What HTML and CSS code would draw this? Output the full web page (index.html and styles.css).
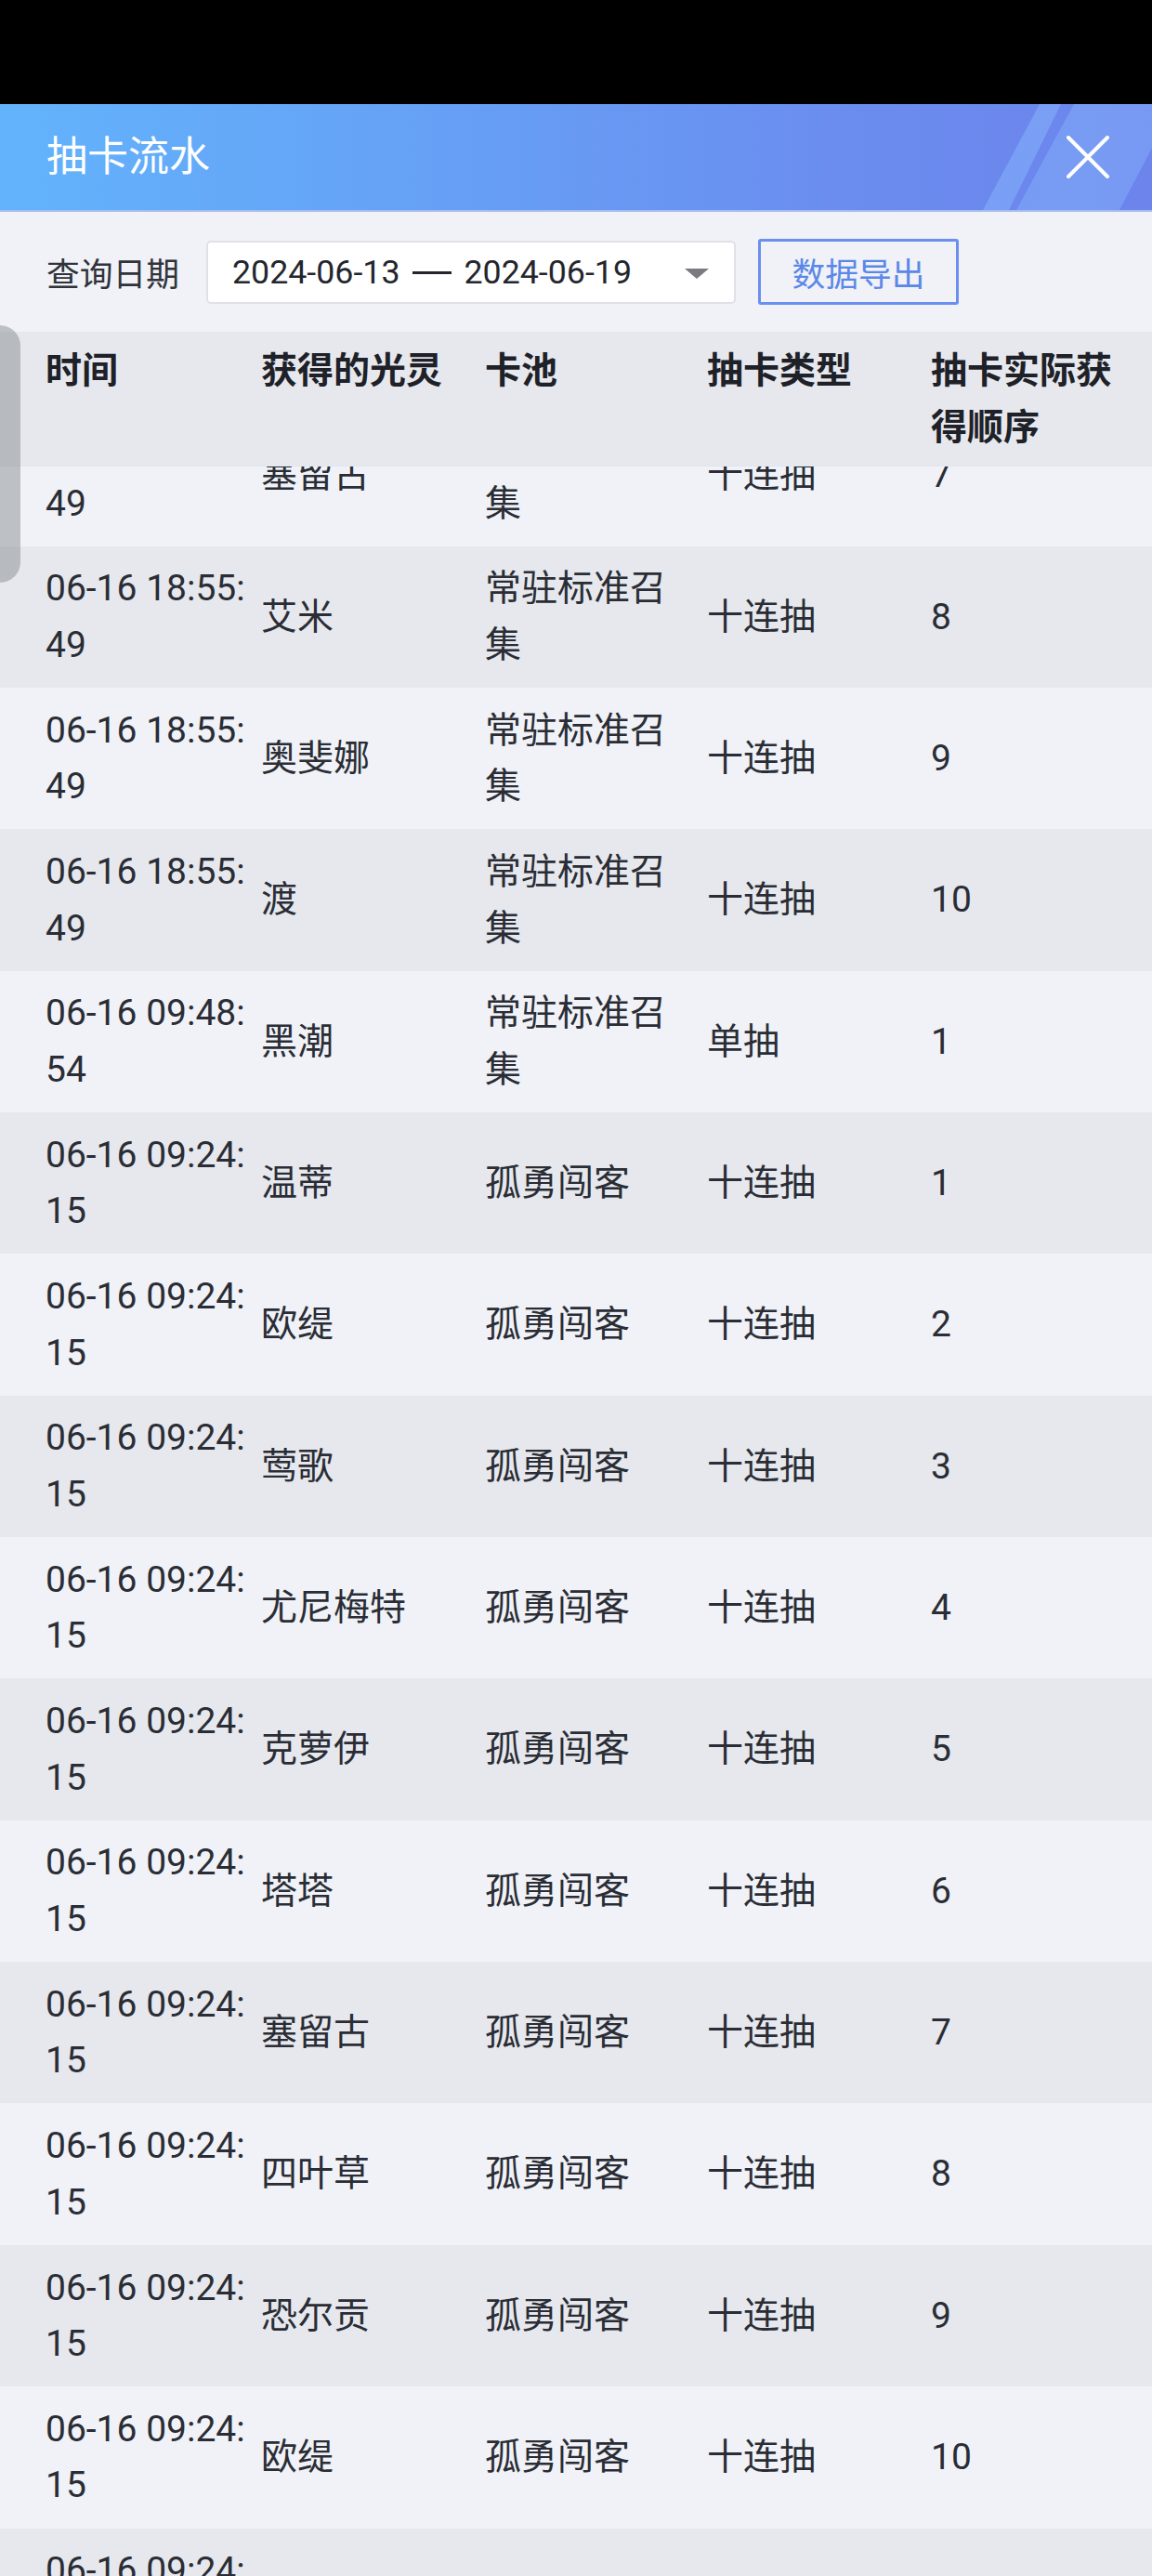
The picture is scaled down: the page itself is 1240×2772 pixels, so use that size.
FILE: index.html
```html
<!DOCTYPE html>
<html lang="zh-CN">
<head>
<meta charset="utf-8">
<title>抽卡流水</title>
<link rel="stylesheet" href="styles.css">
</head>
<body>
<div class="screen">
  <div class="statusbar"></div>
  <header class="titlebar">
    <svg class="stripes" viewBox="1040 0 200 114" preserveAspectRatio="none" aria-hidden="true">
      <polygon points="1119,0 1142,0 1086,114 1058,114" fill="#8cbcff" fill-opacity="0.45"/>
      <polygon points="1156,0 1240,0 1240,47 1205,114 1094,114" fill="#8cbcff" fill-opacity="0.38"/>
    </svg>
    <h1 class="title">抽卡流水</h1>
    <button class="close" aria-label="关闭">
      <svg viewBox="0 0 48 46" width="48" height="46"><path d="M3 2 L45 44 M45 2 L3 44" stroke="#fff" stroke-width="4" stroke-linecap="round" fill="none"/></svg>
    </button>
  </header>
  <div class="filters">
    <span class="filter-label">查询日期</span>
    <div class="date-range">
      <span class="date-text">
        <span>2024-06-13</span>
        <span class="date-sep" aria-label="至"></span>
        <span>2024-06-19</span>
      </span>
      <span class="caret"></span>
    </div>
    <button class="export">数据导出</button>
  </div>
  <div class="table">
    <div class="thead">
      <div class="cell c1">时间</div>
      <div class="cell">获得的光灵</div>
      <div class="cell">卡池</div>
      <div class="cell">抽卡类型</div>
      <div class="cell">抽卡实际获得顺序</div>
    </div>
    <div class="tbody">
      <div class="tbody-inner">
        <div class="row"><div class="cell c1">06-16 18:55:49</div><div class="cell">塞留古</div><div class="cell">常驻标准召集</div><div class="cell">十连抽</div><div class="cell">7</div></div>
        <div class="row"><div class="cell c1">06-16 18:55:49</div><div class="cell">艾米</div><div class="cell">常驻标准召集</div><div class="cell">十连抽</div><div class="cell">8</div></div>
        <div class="row"><div class="cell c1">06-16 18:55:49</div><div class="cell">奥斐娜</div><div class="cell">常驻标准召集</div><div class="cell">十连抽</div><div class="cell">9</div></div>
        <div class="row"><div class="cell c1">06-16 18:55:49</div><div class="cell">渡</div><div class="cell">常驻标准召集</div><div class="cell">十连抽</div><div class="cell">10</div></div>
        <div class="row"><div class="cell c1">06-16 09:48:54</div><div class="cell">黑潮</div><div class="cell">常驻标准召集</div><div class="cell">单抽</div><div class="cell">1</div></div>
        <div class="row"><div class="cell c1">06-16 09:24:15</div><div class="cell">温蒂</div><div class="cell">孤勇闯客</div><div class="cell">十连抽</div><div class="cell">1</div></div>
        <div class="row"><div class="cell c1">06-16 09:24:15</div><div class="cell">欧缇</div><div class="cell">孤勇闯客</div><div class="cell">十连抽</div><div class="cell">2</div></div>
        <div class="row"><div class="cell c1">06-16 09:24:15</div><div class="cell">莺歌</div><div class="cell">孤勇闯客</div><div class="cell">十连抽</div><div class="cell">3</div></div>
        <div class="row"><div class="cell c1">06-16 09:24:15</div><div class="cell">尤尼梅特</div><div class="cell">孤勇闯客</div><div class="cell">十连抽</div><div class="cell">4</div></div>
        <div class="row"><div class="cell c1">06-16 09:24:15</div><div class="cell">克萝伊</div><div class="cell">孤勇闯客</div><div class="cell">十连抽</div><div class="cell">5</div></div>
        <div class="row"><div class="cell c1">06-16 09:24:15</div><div class="cell">塔塔</div><div class="cell">孤勇闯客</div><div class="cell">十连抽</div><div class="cell">6</div></div>
        <div class="row"><div class="cell c1">06-16 09:24:15</div><div class="cell">塞留古</div><div class="cell">孤勇闯客</div><div class="cell">十连抽</div><div class="cell">7</div></div>
        <div class="row"><div class="cell c1">06-16 09:24:15</div><div class="cell">四叶草</div><div class="cell">孤勇闯客</div><div class="cell">十连抽</div><div class="cell">8</div></div>
        <div class="row"><div class="cell c1">06-16 09:24:15</div><div class="cell">恐尔贡</div><div class="cell">孤勇闯客</div><div class="cell">十连抽</div><div class="cell">9</div></div>
        <div class="row"><div class="cell c1">06-16 09:24:15</div><div class="cell">欧缇</div><div class="cell">孤勇闯客</div><div class="cell">十连抽</div><div class="cell">10</div></div>
        <div class="row"><div class="cell c1">06-16 09:24:15</div><div class="cell">卡蒂</div><div class="cell">孤勇闯客</div><div class="cell">十连抽</div><div class="cell">1</div></div>
      </div>
    </div>
  </div>
  <div class="side-handle"></div>
</div>
</body>
</html>
```

FILE: styles.css
```css
* {
  box-sizing: border-box;
}

html,
body {
  margin: 0;
  padding: 0;
}

body {
  width: 1240px;
  height: 2772px;
  overflow: hidden;
  background: #f0f2f7;
  font-family: Roboto, "Noto Sans CJK SC", sans-serif;
  color: #2a2d35;
}

.screen {
  position: relative;
  height: 2772px;
  overflow: hidden;
  display: flex;
  flex-direction: column;
}

.statusbar {
  flex: none;
  height: 112px;
  background: #000;
}

.titlebar {
  position: relative;
  flex: none;
  height: 116px;
  display: flex;
  align-items: center;
  padding-left: 50px;
  background: linear-gradient(90deg, #62b3fc 0%, #669ff5 40%, #6b8cef 75%, #6c84ec 100%);
  border-bottom: 2px solid #a7bdee;
  overflow: hidden;
}

.stripes {
  position: absolute;
  top: 0;
  right: 0;
  width: 200px;
  height: 114px;
}

.title {
  position: relative;
  margin: 0;
  font-size: 44px;
  font-weight: 400;
  line-height: 1;
  color: #fff;
}

.close {
  position: relative;
  margin-left: auto;
  margin-right: 45px;
  padding: 0;
  border: 0;
  background: none;
  width: 48px;
  height: 46px;
  display: flex;
}

.filters {
  flex: none;
  height: 129px;
  display: flex;
  align-items: center;
  padding-left: 50px;
  background: #f0f2f7;
}

.filter-label {
  font-size: 35.75px;
  color: #30333a;
  margin-right: 29px;
}

.date-range {
  width: 570px;
  height: 68px;
  background: #fff;
  border: 2px solid #dfe1e6;
  border-radius: 5px;
  display: flex;
  align-items: center;
  justify-content: space-between;
  padding: 0 27px 0 26px;
  margin-right: 24px;
}

.date-text {
  display: flex;
  align-items: center;
  font-size: 35.75px;
  color: #23262d;
  white-space: nowrap;
}

.date-sep {
  display: block;
  width: 42px;
  height: 3px;
  background: #23262d;
  margin: 2px 14px 0 13px;
}

.caret {
  width: 0;
  height: 0;
  border-left: 13.5px solid transparent;
  border-right: 13.5px solid transparent;
  border-top: 11px solid #7a7b7e;
  margin-top: 3px;
}

.export {
  width: 216px;
  height: 71px;
  border: 3px solid #6b8ff0;
  border-radius: 3px;
  background: transparent;
  color: #5b87e8;
  font-family: inherit;
  font-size: 35.75px;
  display: flex;
  align-items: center;
  justify-content: center;
  padding: 0;
}

.table {
  flex: 1;
  display: flex;
  flex-direction: column;
  min-height: 0;
}

.thead,
.row {
  display: grid;
  grid-template-columns: 281px 241px 239px 241px 238px;
}

.cell {
  font-size: 39px;
  line-height: 60.5px;
  padding-right: 14px;
  word-break: break-all;
}

.cell.c1 {
  padding-left: 49px;
  padding-right: 10px;
}

.thead {
  flex: none;
  height: 145px;
  align-items: start;
  padding-top: 12px;
  background: #e6e8ed;
  border-bottom: 1px solid #dfe6f0;
}

.thead .cell {
  font-weight: 700;
  color: #1e2128;
}

.tbody {
  flex: 1;
  overflow: hidden;
  min-height: 0;
}

.tbody-inner {
  margin-top: -66.65px;
}

.row {
  height: 152.35px;
  align-items: center;
  background: #f0f2f7;
}

.row:nth-child(even) {
  background: #e6e8ed;
}

.side-handle {
  position: absolute;
  left: 0;
  top: 350px;
  width: 22px;
  height: 277px;
  border-radius: 0 22px 22px 0;
  background: rgba(120, 123, 128, 0.42);
}
```
